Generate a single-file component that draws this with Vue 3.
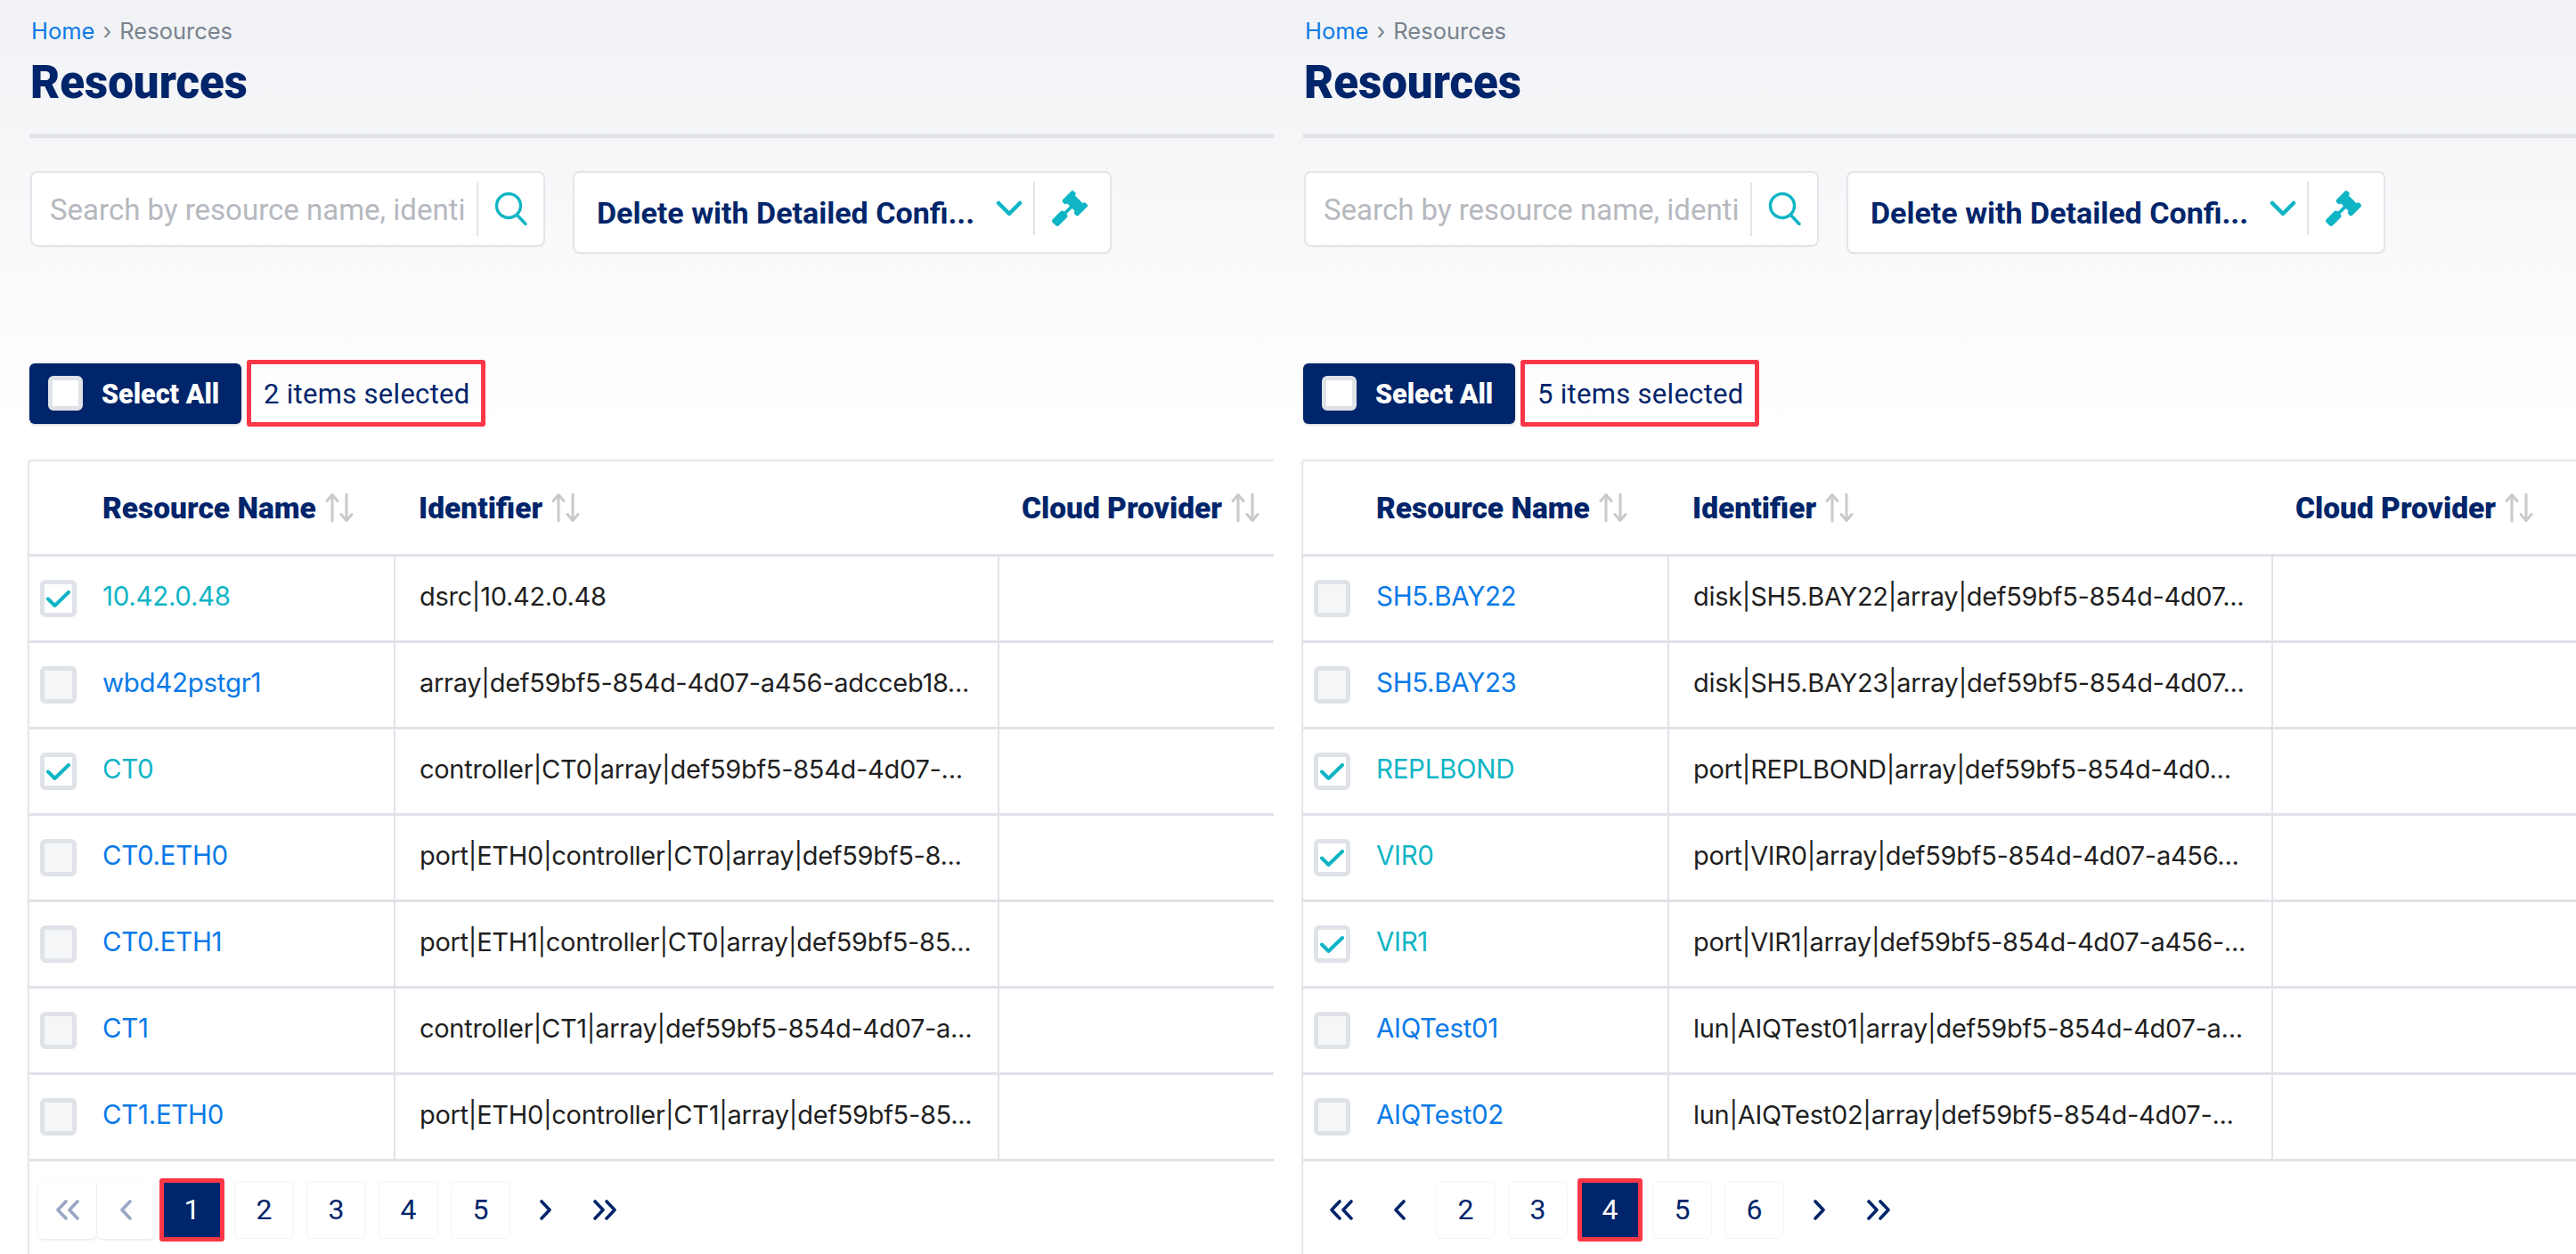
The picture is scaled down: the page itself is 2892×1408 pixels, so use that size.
<script setup>
const leftRows = [
  { name: '10.42.0.48', id: 'dsrc|10.42.0.48', on: true },
  { name: 'wbd42pstgr1', id: 'array|def59bf5-854d-4d07-a456-adcceb18...', on: false },
  { name: 'CT0', id: 'controller|CT0|array|def59bf5-854d-4d07-...', on: true },
  { name: 'CT0.ETH0', id: 'port|ETH0|controller|CT0|array|def59bf5-8...', on: false },
  { name: 'CT0.ETH1', id: 'port|ETH1|controller|CT0|array|def59bf5-85...', on: false },
  { name: 'CT1', id: 'controller|CT1|array|def59bf5-854d-4d07-a...', on: false },
  { name: 'CT1.ETH0', id: 'port|ETH0|controller|CT1|array|def59bf5-85...', on: false },
]
const rightRows = [
  { name: 'SH5.BAY22', id: 'disk|SH5.BAY22|array|def59bf5-854d-4d07...', on: false },
  { name: 'SH5.BAY23', id: 'disk|SH5.BAY23|array|def59bf5-854d-4d07...', on: false },
  { name: 'REPLBOND', id: 'port|REPLBOND|array|def59bf5-854d-4d0...', on: true },
  { name: 'VIR0', id: 'port|VIR0|array|def59bf5-854d-4d07-a456...', on: true },
  { name: 'VIR1', id: 'port|VIR1|array|def59bf5-854d-4d07-a456-...', on: true },
  { name: 'AIQTest01', id: 'lun|AIQTest01|array|def59bf5-854d-4d07-a...', on: false },
  { name: 'AIQTest02', id: 'lun|AIQTest02|array|def59bf5-854d-4d07-...', on: false },
]
const panels = [
  { key: 'l', count: 2, rows: leftRows, pages: [1, 2, 3, 4, 5], active: 1, disabledBack: true },
  { key: 'r', count: 5, rows: rightRows, pages: [2, 3, 4, 5, 6], active: 4, disabledBack: false },
]
const columns = ['Resource Name', 'Identifier', 'Cloud Provider']
</script>

<template>
  <div class="page">
    <section v-for="p in panels" :key="p.key" class="panel" :class="p.key">
      <nav class="crumbs"><a class="home">Home</a><span class="sep">›</span><span>Resources</span></nav>
      <h1 class="title">Resources</h1>
      <div class="rule"></div>

      <div class="tools">
        <div class="search">
          <input class="placeholder" placeholder="Search by resource name, identifier" />
          <span class="search-btn">
            <svg width="37" height="37" viewBox="0 0 37 37" fill="none" stroke="#0fb5c5" stroke-width="3.4" stroke-linecap="round">
              <circle cx="16" cy="15" r="13.5" />
              <path d="M25.5 25.5L35 35.5" />
            </svg>
          </span>
        </div>
        <div class="action">
          <span class="action-text">Delete with Detailed Confi...</span>
          <svg class="chev" width="30" height="18" viewBox="0 0 30 18" fill="none" stroke="#0fb5c5" stroke-width="4.5" stroke-linecap="round" stroke-linejoin="round">
            <path d="M3 3L15 15L27 3" />
          </svg>
          <span class="action-btn">
            <svg width="40" height="40" viewBox="0 0 512 512" fill="#0fb5c5">
              <path d="M504.971 199.362l-22.627-22.627c-9.373-9.373-24.569-9.373-33.941 0l-5.657 5.657L329.608 69.255l5.657-5.657c9.373-9.373 9.373-24.569 0-33.941L312.638 7.029c-9.373-9.373-24.569-9.373-33.941 0L154.246 131.48c-9.373 9.373-9.373 24.569 0 33.941l22.627 22.627c9.373 9.373 24.569 9.373 33.941 0l5.657-5.657 39.598 39.598-81.04 81.04-5.657-5.657c-12.497-12.497-32.758-12.497-45.255 0L9.373 412.118c-12.497 12.497-12.497 32.758 0 45.255l45.255 45.255c12.497 12.497 32.758 12.497 45.255 0l114.745-114.745c12.497-12.497 12.497-32.758 0-45.255l-5.657-5.657 81.04-81.04 39.598 39.598-5.657 5.657c-9.373 9.373-9.373 24.569 0 33.941l22.627 22.627c9.373 9.373 24.569 9.373 33.941 0l124.451-124.451c9.372-9.372 9.372-24.568 0-33.941z" />
            </svg>
          </span>
        </div>
      </div>

      <div class="select-row">
        <button class="select-all"><span class="box-all"></span><span class="select-label">Select All</span></button>
        <div class="count">{{ p.count }} items selected</div>
      </div>

      <div class="table">
        <div class="row head">
          <div v-for="c in columns" :key="c" class="hcell">
            <span>{{ c }}</span>
            <svg class="sort" width="32" height="34" viewBox="0 0 32 34" fill="none" stroke="#cacaca" stroke-width="3" stroke-linecap="round" stroke-linejoin="round">
              <path d="M8 32V3M2 9.5L8 2.5L14 9.5" />
              <path d="M24 2V31M18 24.5L24 31.5L30 24.5" />
            </svg>
          </div>
        </div>
        <div v-for="r in p.rows" :key="r.name" class="row">
          <div class="cell first">
            <span class="box" :class="{ on: r.on }">
              <svg v-if="r.on" width="27" height="19" viewBox="0 0 27 19" fill="none" stroke="#0fb5c5" stroke-width="4" stroke-linecap="round" stroke-linejoin="round">
                <path d="M2 9.5L9.5 17L25 2" />
              </svg>
            </span>
            <a class="name" :class="{ on: r.on }">{{ r.name }}</a>
          </div>
          <div class="cell id">{{ r.id }}</div>
          <div class="cell last"></div>
        </div>
        <div class="pager">
          <span class="pg arrow" :class="{ boxed: p.disabledBack, off: p.disabledBack }">
            <svg width="28" height="23" viewBox="0 0 28 23" fill="none" stroke="currentColor" stroke-width="3.6" stroke-linecap="round" stroke-linejoin="round"><path d="M12 2L3 11.5L12 21M25 2L16 11.5L25 21" /></svg>
          </span>
          <span class="pg arrow" :class="{ boxed: p.disabledBack, off: p.disabledBack }">
            <svg width="15" height="23" viewBox="0 0 15 23" fill="none" stroke="currentColor" stroke-width="3.6" stroke-linecap="round" stroke-linejoin="round"><path d="M12 2L3 11.5L12 21" /></svg>
          </span>
          <span v-for="n in p.pages" :key="n" class="pg num" :class="{ active: n === p.active }">{{ n }}</span>
          <span class="pg arrow">
            <svg width="15" height="23" viewBox="0 0 15 23" fill="none" stroke="currentColor" stroke-width="3.6" stroke-linecap="round" stroke-linejoin="round"><path d="M3 2L12 11.5L3 21" /></svg>
          </span>
          <span class="pg arrow">
            <svg width="28" height="23" viewBox="0 0 28 23" fill="none" stroke="currentColor" stroke-width="3.6" stroke-linecap="round" stroke-linejoin="round"><path d="M3 2L12 11.5L3 21M16 2L25 11.5L16 21" /></svg>
          </span>
        </div>
      </div>
    </section>
  </div>
</template>

<style>
html, body { margin: 0; background: #fff; }
</style>

<style scoped>
.page {
  display: flex;
  width: 2892px;
  height: 1408px;
  overflow: hidden;
  font-family: Roboto, "Liberation Sans", sans-serif;
  color: #00256a;
  background: linear-gradient(180deg, #f1f2f5 0, #ffffff 480px);
}
.panel {
  box-sizing: border-box;
  padding-left: 33px;
  overflow: hidden;
  height: 1408px;
  flex: none;
}
.panel.l { width: 1430px; }
.panel.r { width: 1462px; }

.crumbs {
  height: 25px;
  padding: 22px 0 0 2px;
  font-family: Inter, Roboto, sans-serif;
  font-size: 25.5px;
  line-height: 25px;
  color: #78838f;
  display: flex;
}
.home { color: #0a7ae8; }
.sep { margin: 0 9px; }
.title {
  margin: 16px 0 0 1px;
  height: 60px;
  font-size: 51px;
  line-height: 60px;
  font-weight: 900;
  color: #00256a;
}
.rule { height: 5px; margin-top: 27px; background: #e0e3e8; width: 100%; }

.tools { display: flex; align-items: flex-start; margin-top: 39px; margin-left: 3px; gap: 35px; height: 89px; }
.search, .action {
  box-sizing: border-box;
  display: flex;
  align-items: center;
  background: #fff;
  border-radius: 6px;
  box-shadow: 0 0 0 2px #e4e5e8, 0 1px 3px #d8d9dc;
}
.search { width: 574px; height: 81px; }
.placeholder {
  box-sizing: border-box;
  width: 465px;
  height: 44px;
  margin: 3px 0 0 20px;
  padding: 0;
  border: 0;
  outline: 0;
  background: transparent;
  font-family: inherit;
  font-size: 33px;
  line-height: 44px;
}
.placeholder::placeholder { color: #b5b9bf; opacity: 1; }
.search-btn {
  margin-left: 14px;
  height: 60px;
  width: 74px;
  border-left: 2px solid #e4e5e8;
  display: flex;
  align-items: center;
  justify-content: center;
  box-sizing: border-box;
}
.action { width: 601px; height: 89px; }
.action-text { margin-left: 25px; width: 426px; font-size: 34px; font-weight: 700; white-space: nowrap; }
.chev { margin-left: 22px; margin-bottom: 10px; }
.action-btn {
  margin-left: 12px;
  height: 60px;
  width: 86px;
  padding-right: 6px;
  border-left: 2px solid #e4e5e8;
  box-sizing: border-box;
  display: flex;
  align-items: center;
  justify-content: center;
  margin-bottom: 10px;
}

.select-row { display: flex; align-items: center; height: 75px; margin-top: 121px; }
.select-all {
  box-sizing: border-box;
  display: flex;
  align-items: center;
  width: 238px;
  height: 68px;
  padding: 0 0 0 21px;
  border: 0;
  border-radius: 6px;
  background: #00256a;
  color: #fff;
  font-family: inherit;
  font-size: 30.5px;
  font-weight: 900;
  box-shadow: 0 1px 3px #c8cad0;
}
.select-label { padding-top: 2px; }
.box-all {
  box-sizing: border-box;
  width: 39px;
  height: 39px;
  margin-right: 21px;
  border: 5px solid #dfe2e7;
  border-radius: 6px;
  background: #fff;
}
.count {
  box-sizing: border-box;
  width: 268px;
  height: 75px;
  margin-left: 6px;
  border: 5px solid #fb3748;
  border-radius: 3px;
  padding-left: 14px;
  font-size: 31px;
  letter-spacing: 0.3px;
  line-height: 67px;
  color: #00256a;
}

.table {
  margin-top: 39px;
  background: #fff;
  box-shadow: 0 0 0 1px #dfe0e4, 0 0 3px 1px #d5d6da;
  height: 920px;
  margin-right: -20px;
}
.row {
  display: grid;
  grid-template-columns: 411px 678px 1fr;
  height: 97px;
  box-sizing: border-box;
  border-bottom: 3px solid #e0e3e8;
}
.row.head { height: 107px; }
.hcell { display: flex; align-items: center; font-size: 33.5px; font-weight: 900; padding-left: 82px; box-sizing: border-box; }
.hcell:nth-child(2) { padding-left: 26px; }
.hcell:nth-child(3) { padding-left: 25px; }
.sort { margin-left: 10px; flex: none; }
.cell { display: flex; align-items: center; box-sizing: border-box; }
.first { border-right: 2px solid #e0e3e8; padding-left: 12px; }
.id {
  border-right: 2px solid #e0e3e8;
  padding-left: 27px;
  padding-bottom: 6px;
  font-family: Inter, Roboto, sans-serif;
  font-size: 29px;
  letter-spacing: -0.3px;
  color: #1f1f1f;
  white-space: nowrap;
  overflow: hidden;
}
.box {
  box-sizing: border-box;
  flex: none;
  display: flex;
  align-items: center;
  justify-content: center;
  width: 41px;
  height: 42px;
  border: 5px solid #dfe2e7;
  border-radius: 6px;
  background: #f5f6f8;
}
.box.on { background: #fff; }
.name {
  margin-left: 29px;
  padding-bottom: 6px;
  font-family: Inter, Roboto, sans-serif;
  font-size: 29.5px;
  letter-spacing: -0.3px;
  color: #0a7ae8;
}
.name.on { color: #0fb5c5; }

.pager { display: flex; align-items: center; padding: 20px 0 0 10px; height: 68px; }
.pg {
  box-sizing: border-box;
  width: 65px;
  height: 63px;
  flex: none;
  display: flex;
  align-items: center;
  justify-content: center;
  border-radius: 6px;
  font-size: 32px;
  color: #00256a;
}
.arrow { margin-right: 1px; }
.arrow.boxed { box-shadow: 0 1px 3px #e2e3e7; background: #fff; height: 65px; }
.arrow.off { color: #9aa6c4; }
.num { margin: 0 8px; box-shadow: 0 0 0 1px #f3f4f6; }
.num.active {
  width: 73px;
  height: 71px;
  margin: 0 4px;
  background: #00256a;
  color: #fff;
  border: 5px solid #fb3748;
  border-radius: 3px;
  box-shadow: none;
}
</style>
